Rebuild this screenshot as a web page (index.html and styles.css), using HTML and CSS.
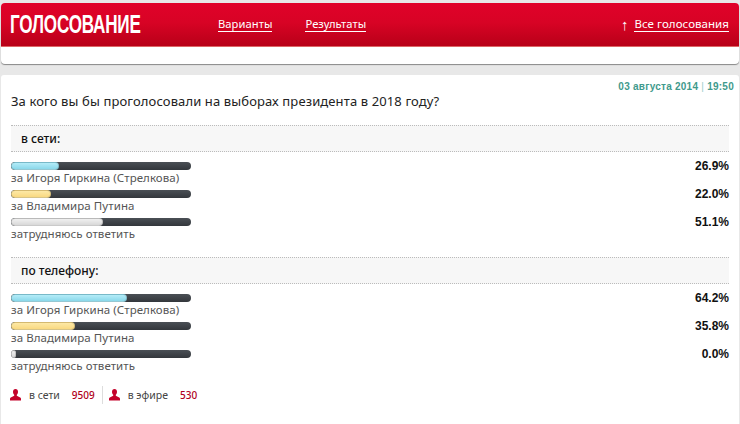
FILE: index.html
```html
<!DOCTYPE html>
<html lang="ru">
<head>
<meta charset="utf-8">
<title>Голосование</title>
<link rel="stylesheet" href="styles.css">
</head>
<body>
<header class="top">
  <div class="bar">
    <div class="logo-box"><h1 class="logo">ГОЛОСОВАНИЕ</h1></div>
    <nav class="nav"><a href="#">Варианты</a><a href="#">Результаты</a></nav>
    <div class="all"><span class="arrow">↑</span><a href="#">Все голосования</a></div>
  </div>
  <div class="under"></div>
</header>
<main class="card">
  <div class="date">03 августа 2014 <span class="sep">|</span> 19:50</div>
  <h2 class="question">За кого вы бы проголосовали на выборах президента в 2018 году?</h2>

  <section class="group">
    <h3 class="group-title">в сети:</h3>
    <div class="rows">
      <div class="row"><div class="info"><div class="track"><div class="fill blue" style="width:26.9%"></div></div><div class="label">за Игоря Гиркина (Стрелкова)</div></div><div class="pct">26.9%</div></div>
      <div class="row"><div class="info"><div class="track"><div class="fill yellow" style="width:22%"></div></div><div class="label">за Владимира Путина</div></div><div class="pct">22.0%</div></div>
      <div class="row"><div class="info"><div class="track"><div class="fill grey" style="width:51.1%"></div></div><div class="label">затрудняюсь ответить</div></div><div class="pct">51.1%</div></div>
    </div>
  </section>

  <section class="group">
    <h3 class="group-title">по телефону:</h3>
    <div class="rows">
      <div class="row"><div class="info"><div class="track"><div class="fill blue" style="width:64.2%"></div></div><div class="label">за Игоря Гиркина (Стрелкова)</div></div><div class="pct">64.2%</div></div>
      <div class="row"><div class="info"><div class="track"><div class="fill yellow" style="width:35.8%"></div></div><div class="label">за Владимира Путина</div></div><div class="pct">35.8%</div></div>
      <div class="row"><div class="info"><div class="track"><div class="fill grey" style="width:3%"></div></div><div class="label">затрудняюсь ответить</div></div><div class="pct">0.0%</div></div>
    </div>
  </section>

  <footer class="stats">
    <div class="stat">
      <svg class="user" viewBox="0 0 11 12"><path d="M5.5 0C3.900 0 3 1.200 3 2.800c0 1.200.5 2.300 1.200 3v1L.8 8.400C.2 8.700 0 9.200 0 10v1.500h11V10c0-.8-.2-1.300-.8-1.600L6.800 6.800v-1C7.500 5.100 8 4 8 2.800 8 1.200 7.100 0 5.500 0z"/></svg>
      <span class="stat-name">в сети</span><b class="stat-num">9509</b>
    </div>
    <div class="stat stat-second">
      <svg class="user" viewBox="0 0 11 12"><path d="M5.5 0C3.900 0 3 1.200 3 2.800c0 1.200.5 2.300 1.200 3v1L.8 8.400C.2 8.700 0 9.200 0 10v1.500h11V10c0-.8-.2-1.300-.8-1.600L6.800 6.800v-1C7.500 5.100 8 4 8 2.800 8 1.200 7.100 0 5.500 0z"/></svg>
      <span class="stat-name">в эфире</span><b class="stat-num">530</b>
    </div>
  </footer>
</main>
</body>
</html>
```

FILE: styles.css
```css
* { box-sizing: border-box; }
html, body { margin: 0; padding: 0; }
body {
  width: 740px;
  height: 424px;
  overflow: hidden;
  background: #e8e8e8;
  padding: 3px 1px 0;
  font-family: "DejaVu Sans", sans-serif;
  color: #222;
}
.top {
  height: 61px;
  background: #fff;
  border-radius: 4px;
  box-shadow: 0 1px 1px #888;
  overflow: hidden;
}
.bar {
  height: 44px;
  display: flex;
  align-items: center;
  padding: 0 10px 0 9px;
  color: #fff;
  background: linear-gradient(#e0022a 0%, #d80325 45%, #b80018 100%);
  border-bottom: 1px solid #d66;
}
.logo-box { width: 208px; }
.logo {
  margin: 0;
  font: bold 25px/1 "Liberation Sans", sans-serif;
  letter-spacing: -0.3px;
  transform: scaleX(.685);
  transform-origin: 0 50%;
}
.nav { display: flex; gap: 33px; }
.bar a {
  color: #fff;
  font-family: "Noto Sans", sans-serif;
  font-size: 11.2px;
  line-height: 14px;
  letter-spacing: .05px;
  text-decoration: none;
  border-bottom: 1px solid #fff;
  display: block;
}
.all { margin-left: auto; display: flex; align-items: center; gap: 6px; }
.all a { font-size: 11.5px; }
.arrow { font-size: 15px; line-height: 16px; font-family: "Liberation Sans", sans-serif; }
.card {
  margin-top: 11px;
  background: #fff;
  height: 349px;
  padding: 0 10px;
  border-radius: 3px 3px 0 0;
  position: relative;
}
.date {
  position: absolute;
  top: 5px;
  right: 5px;
  font: bold 10px/13px "Liberation Sans", sans-serif;
  color: #3f9a8c;
  letter-spacing: .25px;
}
.sep { color: #9cc; font-weight: normal; }
.question {
  margin: 0;
  padding-top: 17px;
  font: 13px/18px "Noto Sans", sans-serif;
  letter-spacing: .12px;
  color: #222;
}
.group { margin-top: 15px; }
.group-title {
  margin: 0;
  height: 27px;
  padding-left: 10px;
  font: 500 12px/26px "Noto Sans", sans-serif;
  color: #111;
  background: #f7f7f7;
  border-top: 1px dotted #bbb;
  border-bottom: 1px dotted #bbb;
}
.rows { margin-top: 10px; display: flex; flex-direction: column; gap: 4px; }
.row { display: flex; justify-content: space-between; height: 24px; }
.info { width: 180px; }
.track {
  height: 8px;
  border-radius: 4px;
  background: linear-gradient(#4a4f55, #33373c);
  overflow: hidden;
}
.fill { height: 8px; border-radius: 4px; border: 1px solid rgba(0,0,0,.15); }
.blue { background: linear-gradient(#b4ecf8, #8ad8ea); }
.yellow { background: linear-gradient(#fde9a6, #f9d981); }
.grey { background: linear-gradient(#f0f0f0, #d8d8d8); }
.label {
  font: 11.5px/15px "Noto Sans", sans-serif;
  letter-spacing: .06px;
  color: #555;
  white-space: nowrap;
}
.pct {
  margin-top: -3px;
  font: bold 12px/14px "Liberation Sans", sans-serif;
  color: #111;
}
.stats { display: flex; align-items: center; margin: 12px 0 0 -1px; height: 18px; }
.stat { display: flex; align-items: center; height: 18px; }
.stat-second { border-left: 1px solid #ddd; margin-left: 7px; padding-left: 6px; }
.user { width: 11px; height: 12px; fill: #c4022a; }
.stat-name {
  margin-left: 8px;
  font: 10.5px/12px "Noto Sans", sans-serif;
  color: #444;
}
.stat-num {
  margin-left: 12px;
  font: 500 10px/12px "Noto Sans", sans-serif;
  color: #b00020;
}
```
